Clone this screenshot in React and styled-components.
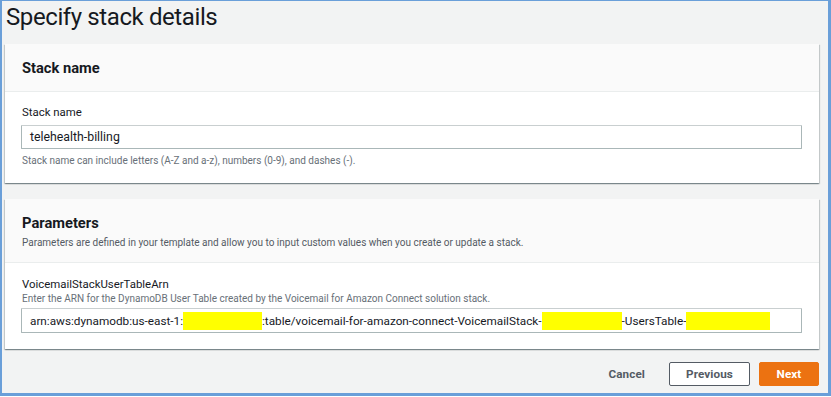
import React from 'react';
import styled, { createGlobalStyle } from 'styled-components';

const GlobalStyle = createGlobalStyle`
  html, body {
    margin: 0;
    padding: 0;
    background: #ffffff;
  }
  * {
    box-sizing: border-box;
  }
`;

const Frame = styled.div`
  width: 831px;
  height: 396px;
  border-style: solid;
  border-color: #6a9fd9;
  border-width: 1px 3px 3px 2px;
  background: #f2f3f3;
  padding: 0 9px 0 3px;
  font-family: Roboto, "Liberation Sans", sans-serif;
  color: #16191f;
  display: flex;
  flex-direction: column;
`;

const PageTitle = styled.h1`
  margin: 0;
  height: 43px;
  padding: 0 0 0 1px;
  font-size: 24px;
  font-weight: 400;
  line-height: 33px;
  letter-spacing: -0.4px;
`;

const Card = styled.section`
  background: #ffffff;
  box-shadow: 0 1px 1px 0 rgba(0, 28, 36, 0.3), 1px 1px 1px 0 rgba(0, 28, 36, 0.15),
    -1px 1px 1px 0 rgba(0, 28, 36, 0.15);
  margin-bottom: ${(p) => p.$gap || 0}px;
`;

const CardHeader = styled.header`
  background: #fafafa;
  border-bottom: 1px solid #eaeded;
  height: ${(p) => p.$height}px;
  padding: ${(p) => p.$pad}px 17px 0;
`;

const CardTitle = styled.h2`
  margin: 0;
  font-size: 14.7px;
  font-weight: 700;
  line-height: 20px;
`;

const CardDesc = styled.p`
  margin: 2px 0 0;
  font-size: 10px;
  line-height: 16px;
  color: #545b64;
`;

const CardBody = styled.div`
  padding: ${(p) => p.$pad}px 17px 0 16px;
  height: ${(p) => p.$height}px;
`;

const Label = styled.div`
  font-size: 11.4px;
  line-height: 16px;
  color: #16191f;
  padding-left: 1px;
`;

const FieldDesc = styled.div`
  font-size: 10px;
  line-height: 14px;
  color: #687078;
  padding-left: 1px;
`;

const Input = styled.div`
  height: ${(p) => p.$h}px;
  margin-top: ${(p) => p.$mt}px;
  border: 1px solid #aab7b8;
  border-top-color: #c9cfd0;
  border-radius: 1px;
  padding: 0 8px;
  display: flex;
  align-items: center;
  font-size: ${(p) => p.$size}px;
  color: #16191f;
  white-space: pre;
  overflow: hidden;
`;

const Redacted = styled.span`
  display: inline-block;
  flex: none;
  width: ${(p) => p.$w}px;
  height: 18px;
  background: #ffff00;
`;

const Hint = styled.div`
  margin-top: 5px;
  font-size: 10px;
  line-height: 14px;
  color: #687078;
  padding-left: 1px;
`;

const Footer = styled.div`
  display: flex;
  justify-content: flex-end;
  align-items: center;
  gap: 9px;
  margin-top: 13px;
`;

const Button = styled.button`
  height: 24px;
  padding: 0 ${(p) => p.$px || 0}px;
  font-family: Roboto, "Liberation Sans", sans-serif;
  font-size: 11.7px;
  font-weight: 700;
  letter-spacing: 0.1px;
  border-radius: 2px;
  cursor: pointer;
  border: 1px solid ${(p) => (p.$variant === 'primary' ? '#ec7211' : p.$variant === 'normal' ? '#545b64' : 'transparent')};
  background: ${(p) => (p.$variant === 'primary' ? '#ec7211' : p.$variant === 'normal' ? '#ffffff' : 'transparent')};
  color: ${(p) => (p.$variant === 'primary' ? '#ffffff' : '#545b64')};
  width: ${(p) => (p.$w ? `${p.$w}px` : 'auto')};
`;

export default function App() {
  return (
    <>
      <GlobalStyle />
      <Frame>
        <PageTitle>Specify stack details</PageTitle>

        <Card $gap={16}>
          <CardHeader $height={48} $pad={14}>
            <CardTitle>Stack name</CardTitle>
          </CardHeader>
          <CardBody $pad={12} $height={91}>
            <Label>Stack name</Label>
            <Input $h={24} $mt={5} $size={12.3}>telehealth-billing</Input>
            <Hint>Stack name can include letters (A-Z and a-z), numbers (0-9), and dashes (-).</Hint>
          </CardBody>
        </Card>

        <Card>
          <CardHeader $height={64} $pad={14}>
            <CardTitle>Parameters</CardTitle>
            <CardDesc>
              Parameters are defined in your template and allow you to input custom values when you create or update a stack.
            </CardDesc>
          </CardHeader>
          <CardBody $pad={13} $height={86}>
            <Label>VoicemailStackUserTableArn</Label>
            <FieldDesc>
              Enter the ARN for the DynamoDB User Table created by the Voicemail for Amazon Connect solution stack.
            </FieldDesc>
            <Input $h={25} $mt={2} $size={11.75}>
              arn:aws:dynamodb:us-east-1:<Redacted $w={79} />:table/voicemail-for-amazon-connect-VoicemailStack-<Redacted $w={80} />-UsersTable-<Redacted $w={84} />
            </Input>
          </CardBody>
        </Card>

        <Footer>
          <Button $variant="link" $px={14}>Cancel</Button>
          <Button $variant="normal" $w={81}>Previous</Button>
          <Button $variant="primary" $w={60}>Next</Button>
        </Footer>
      </Frame>
    </>
  );
}
